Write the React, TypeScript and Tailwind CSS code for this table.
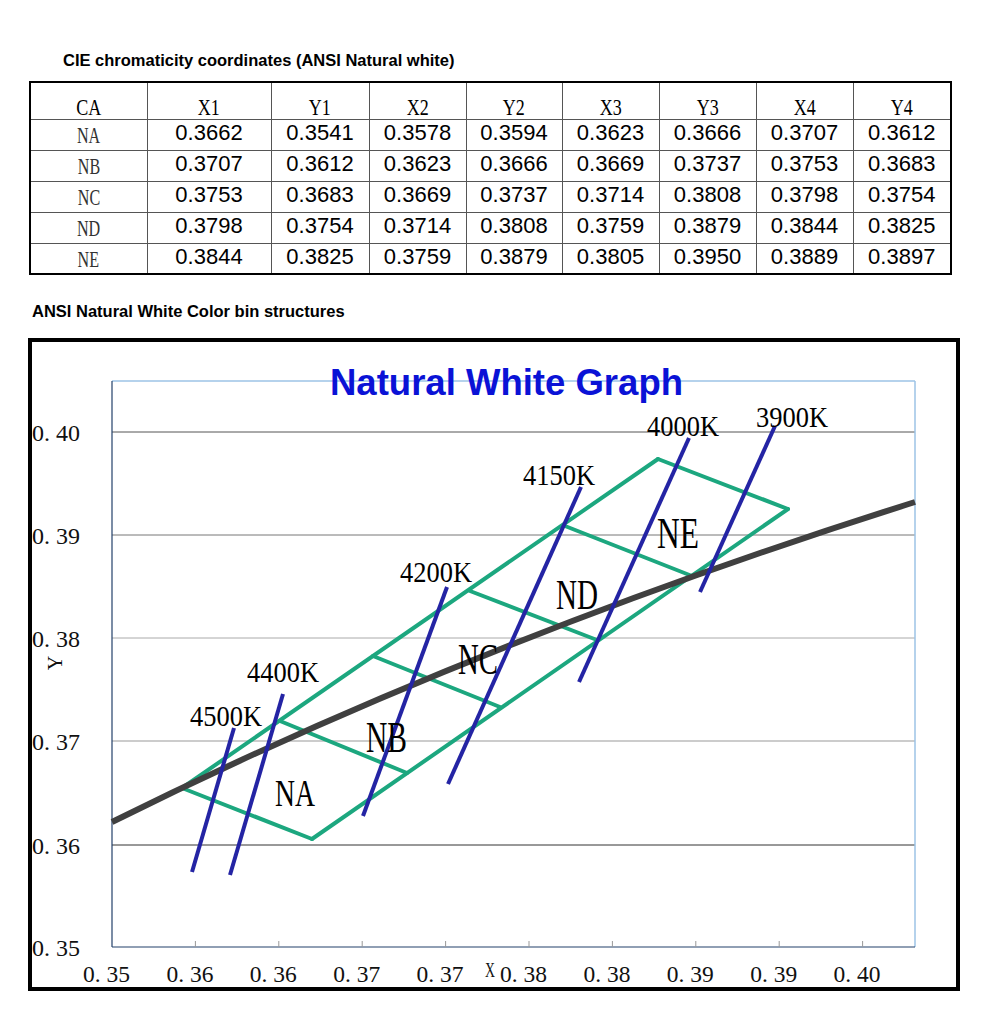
import React from "react";

const headers = ["CA", "X1", "Y1", "X2", "Y2", "X3", "Y3", "X4", "Y4"];
const widths = ["w-[117px]", "w-[124px]", "w-[98px]", "w-[97px]", "w-[96px]", "w-[97px]", "w-[97px]", "w-[97px]", "w-[98px]"];
const rows: [string, string[]][] = [
  ["NA", ["0.3662", "0.3541", "0.3578", "0.3594", "0.3623", "0.3666", "0.3707", "0.3612"]],
  ["NB", ["0.3707", "0.3612", "0.3623", "0.3666", "0.3669", "0.3737", "0.3753", "0.3683"]],
  ["NC", ["0.3753", "0.3683", "0.3669", "0.3737", "0.3714", "0.3808", "0.3798", "0.3754"]],
  ["ND", ["0.3798", "0.3754", "0.3714", "0.3808", "0.3759", "0.3879", "0.3844", "0.3825"]],
  ["NE", ["0.3844", "0.3825", "0.3759", "0.3879", "0.3805", "0.3950", "0.3889", "0.3897"]],
];

const SERIF = "'Liberation Serif','Times New Roman',serif";
const GREEN = "#1ca77f";
const BLUE = "#2424a4";

const grid = [
  { y: 433, c: "#555555", label: "0. 40" },
  { y: 536, c: "#777777", label: "0. 39" },
  { y: 639, c: "#aaaaaa", label: "0. 38" },
  { y: 742, c: "#999999", label: "0. 37" },
  { y: 846, c: "#333333", label: "0. 36" },
];
const yLabels = [...grid.map((g) => ({ y: g.y, label: g.label })), { y: 948, label: "0. 35" }];
const xLabels = ["0. 35", "0. 36", "0. 36", "0. 37", "0. 37", "0. 38", "0. 38", "0. 39", "0. 39", "0. 40"];

const greenLines: [number, number, number, number][] = [
  [182, 789, 658, 460],
  [312, 840, 788, 510],
  [182, 789, 312, 840],
  [658, 460, 788, 510],
  [280, 722, 407, 774],
  [373, 657, 500, 708],
  [470, 592, 597, 641],
  [565, 527, 692, 577],
];
const blueLines: [number, number, number, number][] = [
  [234, 729, 192, 873],
  [283, 695, 230, 876],
  [447, 588, 363, 817],
  [581, 488, 448, 785],
  [689, 439, 579, 683],
  [775, 427, 700, 593],
];
const kLabels: [string, number, number][] = [
  ["4500K", 190, 727],
  ["4400K", 247, 683],
  ["4200K", 400, 583],
  ["4150K", 523, 486],
  ["4000K", 647, 437],
  ["3900K", 756, 428],
];
const bins: [string, number, number, number, number][] = [
  ["NA", 275, 807, 40, 38],
  ["NB", 366, 753, 41, 44],
  ["NC", 458, 675, 40, 44],
  ["ND", 556, 610, 42, 42],
  ["NE", 657, 549, 42, 44],
];

function Chart() {
  return (
    <svg width={924} height={645} viewBox="32 343 924 645" className="block">
      {grid.map((g) => (
        <line key={g.y} x1={112} y1={g.y} x2={915} y2={g.y} stroke={g.c} strokeWidth={1} />
      ))}
      <line x1={112} y1={382} x2={915} y2={382} stroke="#9cc3e6" strokeWidth={1.5} />
      <line x1={915} y1={382} x2={915} y2={948} stroke="#9cc3e6" strokeWidth={1.5} />
      <line x1={112} y1={382} x2={112} y2={948} stroke="#23406a" strokeWidth={1.2} />
      <line x1={112} y1={948} x2={915} y2={948} stroke="#23406a" strokeWidth={1.2} />
      {Array.from({ length: 9 }, (_, i) => {
        const x = 112 + 83.4 * (i + 1);
        return <line key={i} x1={x} y1={942} x2={x} y2={948} stroke="#999" strokeWidth={1} />;
      })}
      <text
        x={330}
        y={396}
        fill="#0a12d6"
        fontFamily="'Liberation Sans',Arial,sans-serif"
        fontWeight={700}
        fontSize={36}
        textLength={353}
        lengthAdjust="spacingAndGlyphs"
      >
        Natural White Graph
      </text>
      {greenLines.map(([x1, y1, x2, y2], i) => (
        <line key={i} x1={x1} y1={y1} x2={x2} y2={y2} stroke={GREEN} strokeWidth={4} strokeLinecap="round" />
      ))}
      <path d="M112,823 Q480,640 915,503" fill="none" stroke="#404040" strokeWidth={6} />
      {blueLines.map(([x1, y1, x2, y2], i) => (
        <line key={i} x1={x1} y1={y1} x2={x2} y2={y2} stroke={BLUE} strokeWidth={4} />
      ))}
      {kLabels.map(([t, x, y]) => (
        <text key={t} x={x} y={y} fontFamily={SERIF} fontSize={29} fill="#000" textLength={72} lengthAdjust="spacingAndGlyphs">
          {t}
        </text>
      ))}
      {bins.map(([t, x, y, w, fs]) => (
        <text key={t} x={x} y={y} fontFamily={SERIF} fontSize={fs} fill="#000" textLength={w} lengthAdjust="spacingAndGlyphs">
          {t}
        </text>
      ))}
      {yLabels.map((l) => (
        <text key={l.y} x={32} y={l.y + 9} fontFamily={SERIF} fontSize={24} fill="#111" textLength={48} lengthAdjust="spacingAndGlyphs">
          {l.label}
        </text>
      ))}
      {xLabels.map((t, i) => (
        <text
          key={i}
          x={112 + 83.4 * i - 5.5}
          y={983}
          textAnchor="middle"
          fontFamily={SERIF}
          fontSize={23}
          fill="#111"
          textLength={47}
          lengthAdjust="spacingAndGlyphs"
        >
          {t}
        </text>
      ))}
      <text x={485} y={978} fontFamily={SERIF} fontSize={22} fill="#111" textLength={10} lengthAdjust="spacingAndGlyphs">
        X
      </text>
      <text transform="translate(62,664) rotate(-90)" textAnchor="middle" fontFamily={SERIF} fontSize={20} fill="#111">
        Y
      </text>
    </svg>
  );
}

export default function App() {
  return (
    <div className="w-[1000px] h-[1019px] bg-white text-black font-['Liberation_Sans',Arial,sans-serif]">
      <div className="pt-[50px] pl-[63px] text-[16.5px] leading-[20px] font-bold">
        CIE chromaticity coordinates (ANSI Natural white)
      </div>
      <table className="ml-[29px] mt-[11px] w-[921px] table-fixed border-collapse border-2 border-black">
        <colgroup>
          {widths.map((w, i) => (
            <col key={i} className={w} />
          ))}
        </colgroup>
        <thead>
          <tr className="h-[37px]">
            {headers.map((h) => (
              <th
                key={h}
                className="border border-[#555] p-0 align-bottom font-normal text-[24px] leading-[23px] font-['Liberation_Serif','Times_New_Roman',serif]"
              >
                <span className="inline-block scale-x-75">{h}</span>
              </th>
            ))}
          </tr>
        </thead>
        <tbody>
          {rows.map(([label, vals]) => (
            <tr key={label} className="h-[31px]">
              <td className="border border-[#555] p-0 pt-[3px] text-center align-middle text-[23px] leading-[22px] text-[#333] font-['Liberation_Serif','Times_New_Roman',serif]">
                <span className="inline-block scale-x-70">{label}</span>
              </td>
              {vals.map((v, i) => (
                <td key={i} className="border border-[#555] p-0 pb-[3px] text-center align-middle text-[22px] leading-[24px]">
                  {v}
                </td>
              ))}
            </tr>
          ))}
        </tbody>
      </table>
      <div className="mt-[26px] pl-[32px] text-[16.5px] leading-[20px] font-bold">
        ANSI Natural White Color bin structures
      </div>
      <div className="mt-[17px] ml-[28px] w-[932px] h-[653px] border-4 border-black">
        <Chart />
      </div>
    </div>
  );
}
